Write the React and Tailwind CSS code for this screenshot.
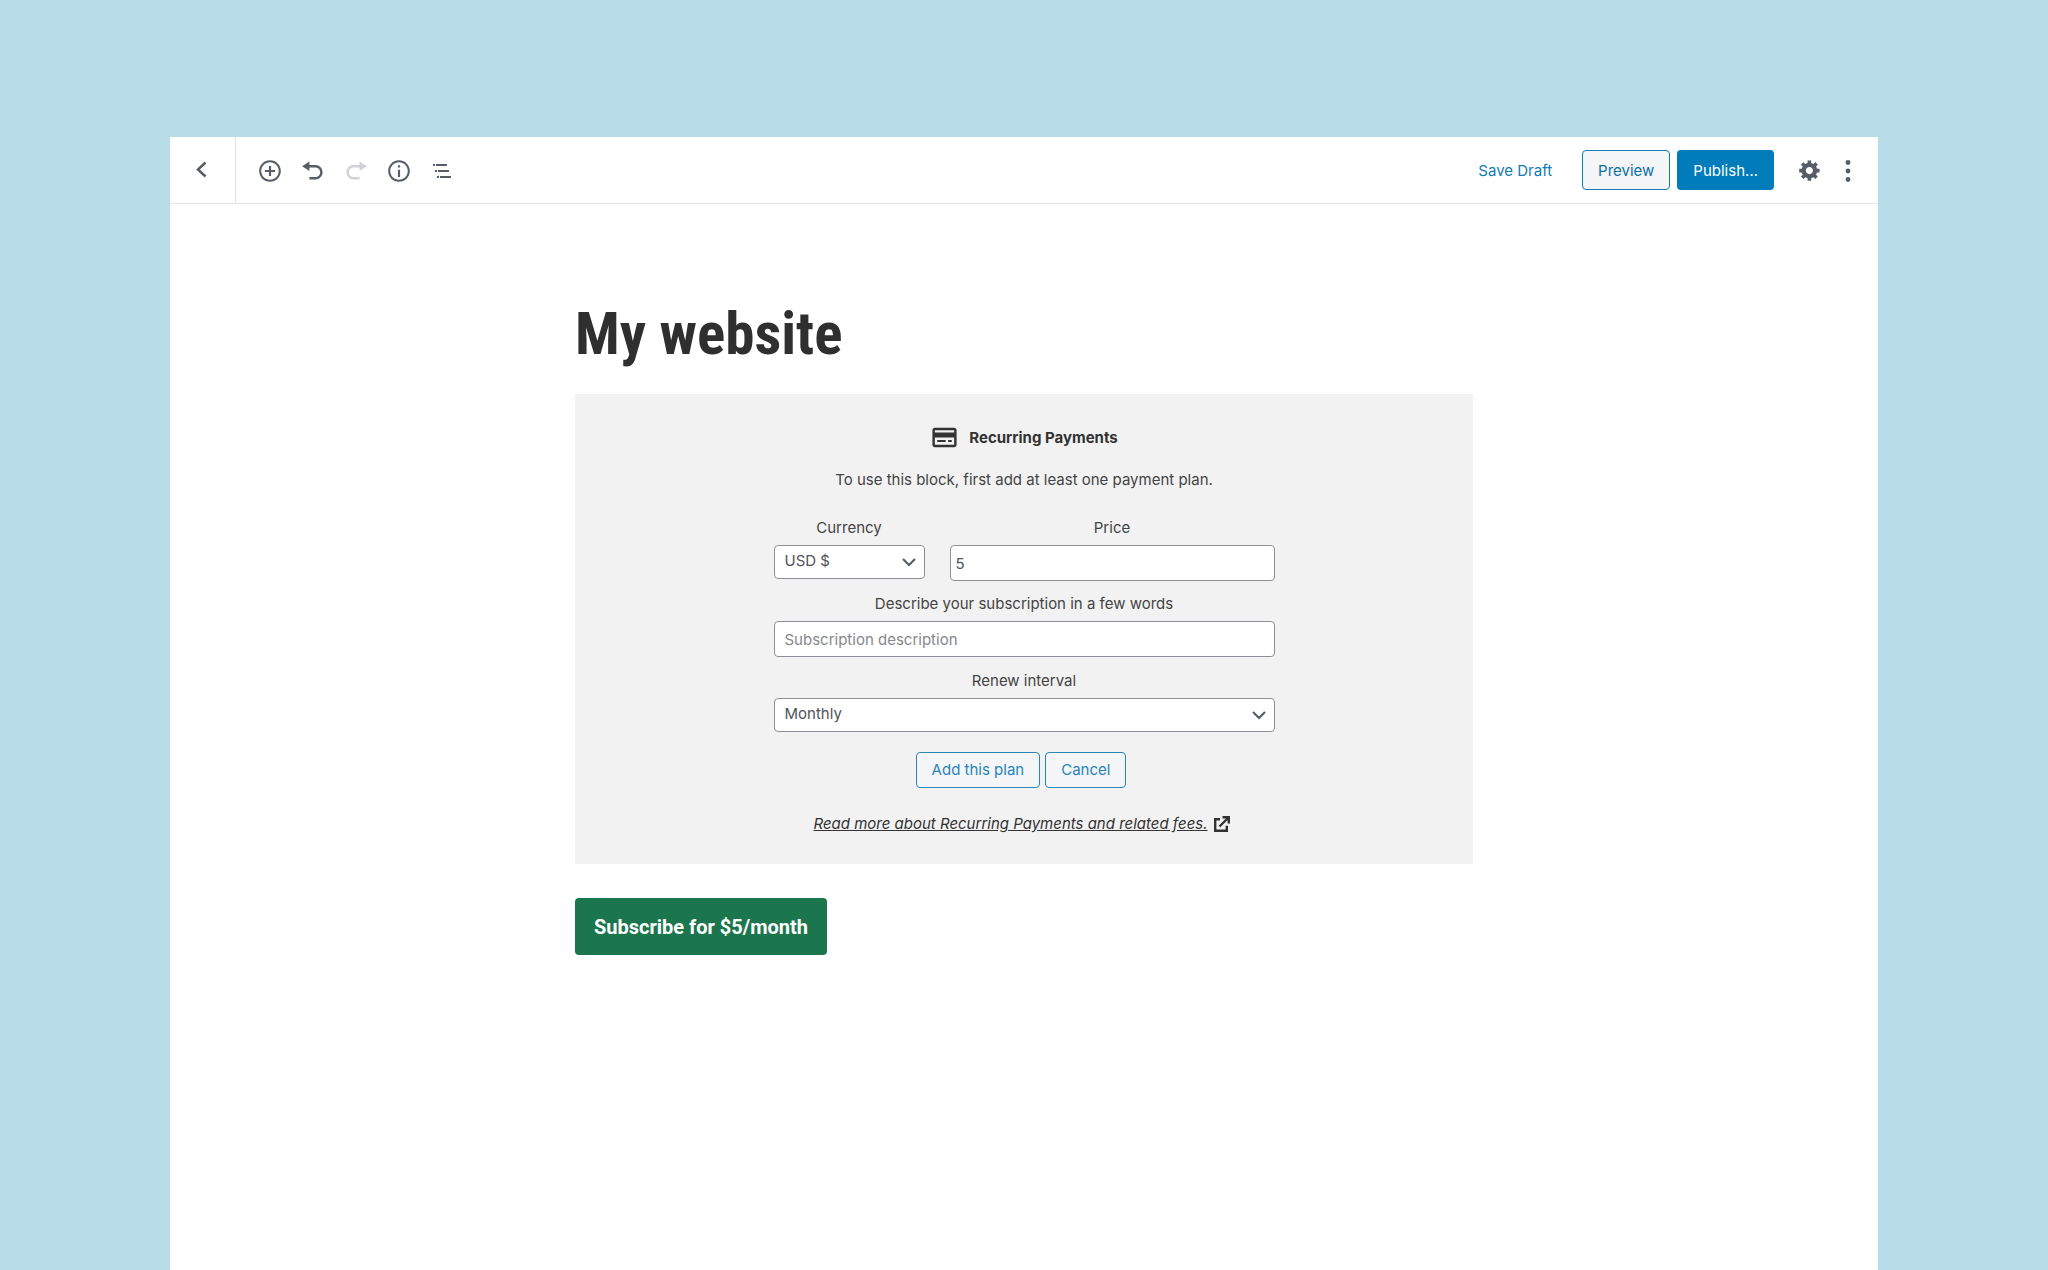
import React from 'react';

const Icon = ({ size = 'size-6', viewBox = '0 0 20 20', children }) => (
  <svg className={['block shrink-0', size].join(' ')} viewBox={viewBox} fill="currentColor" aria-hidden="true">
    {children}
  </svg>
);

const TOOLS = [
  {
    label: 'Add block',
    path: 'M10 1c-5 0-9 4-9 9s4 9 9 9 9-4 9-9-4-9-9-9zm0 16.3c-4 0-7.300-3.300-7.300-7.300s3.300-7.300 7.300-7.300 7.300 3.300 7.300 7.300-3.300 7.300-7.300 7.300zm.9-11.500H9.100v3.300H5.800v1.800h3.300v3.300h1.800v-3.300h3.300V9.100h-3.300V5.800z',
  },
  {
    label: 'Undo',
    path: 'M12 5H7V2L1 6l6 4V7h5c2.2 0 4 1.8 4 4s-1.8 4-4 4H7v2h5c3.3 0 6-2.700 6-6s-2.700-6-6-6z',
  },
  {
    label: 'Redo',
    disabled: true,
    path: 'M8 5h5V2l6 4-6 4V7H8c-2.200 0-4 1.800-4 4s1.800 4 4 4h5v2H8c-3.300 0-6-2.700-6-6s2.700-6 6-6z',
  },
  {
    label: 'Content structure',
    path: 'M9.100 15h1.800V9H9.100v6zM10 5.200c-.6 0-1 .4-1 1s.4 1 1 1 1-.4 1-1-.4-1-1-1zM10 1c-5 0-9 4-9 9s4 9 9 9 9-4 9-9-4-9-9-9zm0 16.300c-4 0-7.300-3.300-7.300-7.300s3.300-7.300 7.300-7.300 7.300 3.300 7.300 7.300-3.300 7.300-7.300 7.300z',
  },
  {
    label: 'Block navigation',
    viewBox: '0 0 24 24',
    path: 'M5 5H3v2h2V5zm3 8h11v-2H8v2zm9-8H6v2h11V5zM7 11H5v2h2v-2zm0 8h2v-2H7v2zm3-2v2h11v-2H10z',
  },
];

const COG =
  'M18 12h-2.180c-.17.7-.44 1.350-.81 1.930l1.540 1.540-2.100 2.100-1.540-1.540c-.58.36-1.230.63-1.910.79V19H8v-2.180c-.68-.16-1.330-.43-1.910-.79l-1.540 1.540-2.120-2.120 1.540-1.540c-.36-.58-.63-1.230-.79-1.910H1V9.030h2.170c.16-.7.44-1.350.8-1.940L2.430 5.550l2.100-2.100 1.540 1.540c.58-.37 1.240-.64 1.930-.81V2h3v2.180c.68.16 1.330.43 1.910.79l1.540-1.540 2.120 2.120-1.540 1.540c.36.59.64 1.240.8 1.940H18V12zm-8.500 1.500c1.660 0 3-1.340 3-3s-1.340-3-3-3-3 1.340-3 3 1.340 3 3 3z';

const Toolbar = () => (
  <header className="flex h-[67px] items-stretch border-b border-[#e2e4e7] text-[#555d66]">
    <button type="button" aria-label="Back" className="flex w-[66px] items-center justify-center border-r border-[#e2e4e7] pr-[2px]">
      <svg className="size-6" viewBox="0 0 24 24" fill="none" stroke="currentColor" strokeWidth="2.5" aria-hidden="true">
        <path d="M15.500 4.500L8 11.500l7.500 7" />
      </svg>
    </button>
    <div className="flex items-center gap-[19px] pt-[2px] pl-[22px]">
      {TOOLS.map((t) => (
        <button key={t.label} type="button" aria-label={t.label} disabled={t.disabled} className="disabled:text-[#d0d2d5]">
          <Icon viewBox={t.viewBox}>
            <path d={t.path} />
          </Icon>
        </button>
      ))}
    </div>
    <div className="ml-auto flex items-center pr-[18px]">
      <button type="button" className="mr-[30px] pt-[2px] text-[#0f7cb5]">Save Draft</button>
      <button type="button" className="mr-[7px] h-10 rounded-[4px] border border-[#0f7cb5] bg-[#f3f5f6] px-[15px] pt-[2px] text-[#0f6fa5]">
        Preview
      </button>
      <button type="button" className="h-10 rounded-[4px] bg-[#007cba] px-4 pt-[2px] text-white">Publish…</button>
      <button type="button" aria-label="Settings" className="ml-6">
        <Icon>
          <path d={COG} />
        </Icon>
      </button>
      <button type="button" aria-label="More options" className="ml-[14px] pt-[2px]">
        <Icon viewBox="0 0 24 24">
          <circle cx="12" cy="3.500" r="2.400" />
          <circle cx="12" cy="12" r="2.400" />
          <circle cx="12" cy="20.500" r="2.400" />
        </Icon>
      </button>
    </div>
  </header>
);

const Select = ({ id, options }) => (
  <div className="relative">
    <select
      id={id}
      className="block h-[34px] w-full appearance-none rounded-[4px] border border-[#8d9096] bg-white pr-8 pb-[2px] pl-[10px] text-[#50545a]"
    >
      {options.map((o) => (
        <option key={o}>{o}</option>
      ))}
    </select>
    <svg
      className="pointer-events-none absolute top-[9px] right-[8px] size-4"
      viewBox="0 0 16 16"
      fill="none"
      stroke="#555d66"
      strokeWidth="2.200"
      aria-hidden="true"
    >
      <path d="M2 5l6 6 6-6" />
    </svg>
  </div>
);

const Field = ({ id, label, className = '', children }) => (
  <div className={['flex flex-col gap-[7px]', className].join(' ')}>
    <label htmlFor={id} className="text-center leading-5">{label}</label>
    {children}
  </div>
);

const OutlineButton = ({ children }) => (
  <button type="button" className="h-9 rounded-[4px] border border-[#2a84b8] bg-[#f3f5f6] px-[15px] text-[#2a84b8]">
    {children}
  </button>
);

const RecurringPayments = () => (
  <section className="flex flex-col items-center bg-[#f2f2f2] pt-[29px] pb-7 text-[#444]">
    <div className="flex items-center gap-[10px] text-[#333]">
      <Icon size="size-[29px]" viewBox="0 0 24 24">
        <path d="M20 4H4c-1.110 0-2 .89-2 2v12c0 1.110.89 2 2 2h16c1.110 0 2-.89 2-2V6c0-1.110-.89-2-2-2zm0 14H4v-6h16v6zm0-10.200H4V6h16v1.800z" />
        <path d="M6 14h7v1.800h-7zM15 14h3v1.800h-3z" />
      </Icon>
      <h2 className="font-bold leading-6">Recurring Payments</h2>
    </div>
    <p className="mt-4 leading-6">To use this block, first add at least one payment plan.</p>
    <form className="mt-[26px] flex w-[501px] max-w-full flex-col" onSubmit={(e) => e.preventDefault()}>
      <div className="flex gap-[25px]">
        <Field id="currency" label="Currency" className="w-[151px]">
          <Select id="currency" options={['USD $', 'EUR €', 'GBP £']} />
        </Field>
        <Field id="price" label="Price" className="flex-1">
          <input
            id="price"
            type="text"
            defaultValue="5"
            className="h-9 w-full rounded-[4px] border border-[#8d9096] bg-white px-[5px] text-[#50545a]"
          />
        </Field>
      </div>
      <Field id="description" label="Describe your subscription in a few words" className="mt-[13px]">
        <input
          id="description"
          type="text"
          placeholder="Subscription description"
          className="h-9 w-full rounded-[4px] border border-[#8d9096] bg-white px-[10px] placeholder:text-[#85888c]"
        />
      </Field>
      <Field id="interval" label="Renew interval" className="mt-[14px]">
        <Select id="interval" options={['Monthly', 'Yearly']} />
      </Field>
      <div className="mt-5 flex justify-center gap-[5px] pr-[6px]">
        <OutlineButton>Add this plan</OutlineButton>
        <OutlineButton>Cancel</OutlineButton>
      </div>
    </form>
    <a href="#fees" className="mt-6 mr-1 flex items-center gap-[5px] text-[#333]">
      <span className="italic leading-6 underline">Read more about Recurring Payments and related fees.</span>
      <svg className="size-[18px]" viewBox="0 0 18 18" fill="none" stroke="currentColor" strokeWidth="2.400" aria-hidden="true">
        <path d="M7 4.200H2.200v11.600h11.600v-5M6.500 11.500L15 3M9.500 2.200h6.300v6.300" />
      </svg>
    </a>
  </section>
);

const App = () => (
  <div className="flex min-h-screen flex-col bg-[#b8dce8] px-[170px] pt-[137px] font-['Inter','Liberation_Sans',sans-serif] text-[15px]">
    <div className="flex flex-1 flex-col bg-white">
      <Toolbar />
      <main className="mx-auto w-full max-w-[898px] pt-[94px]">
        <h1 className="font-['Roboto_Condensed','Roboto',sans-serif] text-[59px] leading-[72px] font-bold text-[#2f2f2f]">
          My website
        </h1>
        <div className="mt-6">
          <RecurringPayments />
        </div>
        <button
          type="button"
          className="mt-[34px] h-[57px] rounded-[4px] bg-[#1b764d] px-[19px] font-['Roboto',sans-serif] text-[20px] font-bold text-white"
        >
          Subscribe for $5/month
        </button>
      </main>
    </div>
  </div>
);

export default App;
